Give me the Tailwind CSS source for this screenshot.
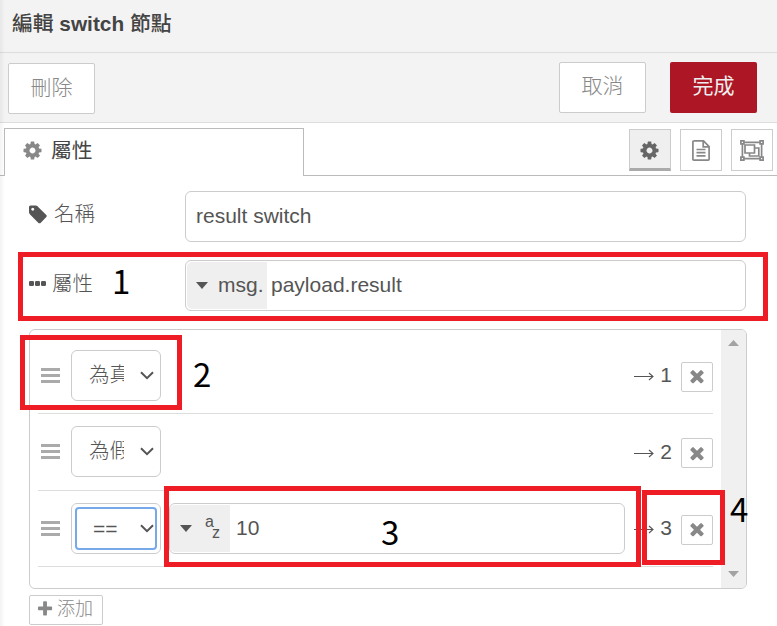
<!DOCTYPE html>
<html lang="zh-Hant">
<head>
<meta charset="utf-8">
<title>編輯 switch 節點</title>
<script src="https://cdn.jsdelivr.net/npm/@tailwindcss/browser@4"></script>
</head>
<body class="bg-white">
<svg class="hidden">
  <symbol id="cog" viewBox="0 0 1792 1792"><path d="M1152 896q0-106-75-181t-181-75-181 75-75 181 75 181 181 75 181-75 75-181zm512-109v222q0 12-8 23t-20 13l-185 28q-19 54-39 91 35 50 107 138 10 12 10 25t-9 23q-27 37-99 108t-94 71q-12 0-26-9l-138-108q-44 23-91 38-16 136-29 186-7 28-36 28h-222q-14 0-24.5-8.5t-11.5-21.5l-28-184q-49-16-90-37l-141 107q-10 9-25 9-14 0-25-11-126-114-165-168-7-10-7-23 0-12 8-23 15-21 51-66.5t54-70.5q-27-50-41-99l-183-27q-13-2-21-12.5t-8-23.5v-222q0-12 8-23t19-13l186-28q14-46 39-92-40-57-107-138-10-12-10-24 0-10 9-23 26-36 98.5-107.5t94.5-71.5q13 0 26 10l138 107q44-23 91-38 16-136 29-186 7-28 36-28h222q14 0 24.5 8.5t11.5 21.5l28 184q49 16 90 37l142-107q9-9 24-9 13 0 25 10 129 119 165 170 7 8 7 22 0 12-8 23-15 21-51 66.5t-54 70.5q26 50 41 98l183 28q13 2 21 12.5t8 23.5z"/></symbol>
  <symbol id="times" viewBox="0 0 1792 1792"><path d="M1490 1322q0 40-28 68l-136 136q-28 28-68 28t-68-28l-294-294-294 294q-28 28-68 28t-68-28l-136-136q-28-28-28-68t28-68l294-294-294-294q-28-28-28-68t28-68l136-136q28-28 68-28t68 28l294 294 294-294q28-28 68-28t68 28l136 136q28 28 28 68t-28 68l-294 294 294 294q28 28 28 68z"/></symbol>
  <symbol id="bars" viewBox="0 0 19 15"><path d="M0 0h19v3H0zM0 6h19v3H0zM0 12h19v3H0z"/></symbol>
  <symbol id="chevron" viewBox="0 0 14 9"><path d="M1 1.2l6 6 6-6" fill="none" stroke="currentColor" stroke-width="2"/></symbol>
  <symbol id="arrow" viewBox="0 0 20 9"><path d="M0 4.500h19M15 1l4 3.500-4 3.500" fill="none" stroke="currentColor" stroke-width="1.100"/></symbol>
  <symbol id="caret" viewBox="0 0 12 7"><path d="M0 0h12L6 7z"/></symbol>
</svg>
<div class="relative flex h-[626px] w-[777px] flex-col overflow-hidden bg-white font-['Liberation_Sans','Noto_Sans_CJK_TC',sans-serif] text-[21px] leading-[30px] text-[#555]">
  <header class="flex h-[53px] shrink-0 items-center border-b border-[#ddd] bg-[#f3f3f3] pb-[5px] pl-3 text-[20.800px] font-bold text-[#444]"><span class="whitespace-pre"><span class="font-medium">編輯</span> switch <span class="font-medium">節點</span></span></header>
  <div class="flex h-[70px] shrink-0 items-start border-b border-[#ddd] bg-[#f3f3f3] pl-2 pr-5 pt-[9px] font-light text-[#888]">
    <div class="mt-px flex h-[51px] w-[87px] items-center justify-center rounded-[2px] border border-[#ccc] bg-white pb-px">刪除</div>
    <div class="ml-auto flex h-[51px] w-[87px] items-center justify-center rounded-[2px] border border-[#ccc] bg-white pb-[3px]">取消</div>
    <div class="ml-6 flex h-[51px] w-[87px] items-center justify-center rounded-[2px] bg-[#ad1625] pb-[3px] font-normal text-[#eee]">完成</div>
  </div>
  <div class="flex h-[53px] shrink-0 border-b border-[#bbb] pl-1 pr-1">
    <div class="-mb-px mt-[5px] flex h-12 w-[300px] items-center border border-b-0 border-[#bbb] bg-white pb-[4px] pl-[17px] text-[20.800px] text-[#444]">
      <svg class="size-[21px] fill-[#888]"><use href="#cog"/></svg><span class="ml-2 pt-px">屬性</span>
    </div>
    <div class="ml-auto mt-[6px] flex gap-[9px] text-[#888]">
      <div class="flex size-[42px] items-center justify-center border border-b-[3px] border-[#ccc] border-b-[#aaa] bg-[#efefef] pr-px pt-[2px]"><svg class="size-[21px] fill-[#666]"><use href="#cog"/></svg></div>
      <div class="flex size-[42px] items-center justify-center border border-[#ccc]">
        <svg class="h-[21px] w-[18px]" viewBox="0 0 18 21" fill="none" stroke="currentColor" stroke-width="1.700"><path d="M1.700 .9h9.800l5.600 5.700v12.600q0 .9-.9.900H1.800q-.9 0-.9-.9V1.800q0-.9.900-.9zM11.200 1v5.800h6M4.500 9.500h9M4.500 12.700h9M4.500 15.800h9"/></svg>
      </div>
      <div class="flex size-[42px] items-center justify-center border border-[#ccc]">
        <svg class="h-[21px] w-6" viewBox="0 0 24 21" fill="none" stroke="currentColor" stroke-width="1.700"><path d="M4 2.300h16M4 18.700h16M2.400 4v13M21.600 4v13"/><path d="M.9.9h3v3h-3zM20.100.9h3v3h-3zM.9 17.100h3v3h-3zM20.100 17.100h3v3h-3zM5 5h9.500v8H5zM14.500 8h4.300v8H9.500v-3"/></svg>
      </div>
    </div>
  </div>
  <main class="flex flex-col pl-[29px] pt-[15px]">
    <div class="flex h-[51px] w-[717px] items-center font-light">
      <div class="flex w-[156px] items-center pb-1"><svg class="mt-[2px] size-[21px] fill-[#555]" viewBox="128 80 1792 1792"><path d="M576 448q0-53-37.500-90.500t-90.500-37.500-90.500 37.500-37.500 90.500 37.500 90.500 90.500 37.500 90.500-37.500 37.500-90.500zm1067 576q0 53-37 90l-491 492q-39 37-91 37-53 0-90-37l-715-716q-38-37-64.500-101t-26.500-117v-416q0-52 38-90t90-38h416q53 0 117 26.500t102 64.500l715 714q37 39 37 91z"/></svg><span class="ml-1 pb-[2px] text-[20.500px]">名稱</span></div>
      <div class="flex h-full grow items-center rounded-md border border-[#ccc] pb-[2px] pl-[10px]">result switch</div>
    </div>
    <div class="mt-[18px] flex h-[51px] w-[717px] items-center font-light">
      <div class="flex w-[156px] items-center pb-1"><svg class="-mt-px h-[5px] w-[17px] fill-[#555]" viewBox="0 0 17 5"><rect width="5" height="5" rx="1.300"/><rect x="6" width="5" height="5" rx="1.300"/><rect x="12" width="5" height="5" rx="1.300"/></svg><span class="ml-[6px] text-[20.500px]">屬性</span></div>
      <div class="flex h-full grow items-center rounded-md border border-[#ccc] p-px">
        <div class="flex h-full w-20 items-center rounded-l-[5px] bg-[#efefef] pl-[9px]"><svg class="h-[7px] w-3 fill-[#555]"><use href="#caret"/></svg><span class="ml-[10px] pb-[2px]">msg.</span></div>
        <span class="ml-1 pb-[2px]">payload.result</span>
      </div>
    </div>
    <div class="mt-[18px] flex h-[260px] w-[718px] overflow-hidden rounded-md border border-[#ccc]">
      <div class="flex w-[691px] flex-col pl-2 pr-2 pt-[7px]">
        <div class="flex h-[77px] items-center border-b border-[#ddd] pl-[3px] pt-[2px]">
          <svg class="mb-px h-[15px] w-[19px] fill-[#aaa]"><use href="#bars"/></svg>
          <div class="mb-px ml-[11px] flex h-[51px] w-[90px] items-center rounded-md border border-[#ccc] pl-[17px] font-light"><span class="mb-px w-[35px] overflow-hidden whitespace-nowrap text-[20.500px]">為真</span><svg class="ml-[16px] h-[9px] w-[14px]"><use href="#chevron"/></svg></div>
          <svg class="ml-auto mt-px h-[9px] w-5"><use href="#arrow"/></svg><span class="ml-[6px] pb-[2px]">1</span>
          <div class="ml-[9px] mt-[2px] flex h-[30px] w-8 items-center justify-center rounded-[2px] border border-[#ccc]"><svg class="-mt-[2px] size-5 fill-[#888]"><use href="#times"/></svg></div>
        </div>
        <div class="flex h-[77px] items-center border-b border-[#ddd] pl-[3px]">
          <svg class="mb-px h-[15px] w-[19px] fill-[#aaa]"><use href="#bars"/></svg>
          <div class="mb-px ml-[11px] flex h-[51px] w-[90px] items-center rounded-md border border-[#ccc] pl-[17px] font-light"><span class="mb-px w-[35px] overflow-hidden whitespace-nowrap text-[20.500px]">為假</span><svg class="ml-[16px] h-[9px] w-[14px]"><use href="#chevron"/></svg></div>
          <svg class="ml-auto mt-[3px] h-[9px] w-5"><use href="#arrow"/></svg><span class="ml-[6px]">2</span>
          <div class="ml-[9px] mt-[2px] flex h-[30px] w-8 items-center justify-center rounded-[2px] border border-[#ccc]"><svg class="size-5 fill-[#888]"><use href="#times"/></svg></div>
        </div>
        <div class="flex h-[76px] items-center border-b border-[#ddd] pl-[3px]">
          <svg class="h-[15px] w-[19px] fill-[#aaa]"><use href="#bars"/></svg>
          <div class="ml-[11px] h-[51px] w-[90px] rounded-md border border-[#ccc] p-[3px]"><div class="flex h-full items-center rounded-[4px] border-2 border-[#76a9ea] pl-4"><span>==</span><svg class="ml-[22px] h-[9px] w-[14px] shrink-0"><use href="#chevron"/></svg></div></div>
          <div class="ml-2 flex h-[51px] w-[456px] items-center rounded-md border border-[#ccc] py-px">
            <div class="flex h-full w-[60px] items-center rounded-l-[5px] bg-[#efefef] pl-[10px]"><svg class="h-[7px] w-3 fill-[#555]"><use href="#caret"/></svg><span class="ml-[13px] flex text-base leading-4"><span class="-mt-[3px]">a</span><span class="-ml-[2px] mt-2">z</span></span></div>
            <span class="ml-[6px] pb-[2px]">10</span>
          </div>
          <svg class="ml-auto mt-[2px] h-[9px] w-5"><use href="#arrow"/></svg><span class="ml-[6px] pb-[2px]">3</span>
          <div class="ml-[9px] mt-[2px] flex h-[30px] w-8 items-center justify-center rounded-[2px] border border-[#ccc]"><svg class="-mt-[2px] size-5 fill-[#888]"><use href="#times"/></svg></div>
        </div>
      </div>
      <div class="flex grow flex-col items-center justify-between bg-[#f0f0f0] pb-[11px] pt-[10px]">
        <svg class="h-[6px] w-[11px] fill-[#a3a3a3]" viewBox="0 0 11 6"><path d="M0 6h11L5.500 0z"/></svg>
        <svg class="h-[6px] w-[11px] fill-[#a3a3a3]" viewBox="0 0 11 6"><path d="M0 0h11L5.500 6z"/></svg>
      </div>
    </div>
    <div class="mt-[6px] flex h-[30px] w-[74px] items-center rounded-[2px] border border-[#ccc] pl-[7px] text-[18px] font-light text-[#888]"><svg class="-mt-[2px] size-[18px] fill-[#888]" viewBox="96 0 1792 1792"><path d="M1600 736v192q0 40-28 68t-68 28h-416v416q0 40-28 68t-68 28h-192q-40 0-68-28t-28-68v-416h-416q-40 0-68-28t-28-68v-192q0-40 28-68t68-28h416v-416q0-40 28-68t68-28h192q40 0 68 28t28 68v416h416q40 0 68 28t28 68z"/></svg><span class="ml-[2px] whitespace-nowrap pb-[2px]">添加</span></div>
  </main>

  <!-- Drawer edge shading and numbered callouts -->
  <div class="absolute inset-y-0 left-0 w-[5px] bg-gradient-to-r from-black/5 to-transparent"></div>
  <div class="absolute left-[18px] top-[252px] h-[69px] w-[750px] border-5 border-[#ee1c24]"></div>
  <div class="absolute left-[20px] top-[335px] h-[75px] w-[162px] border-5 border-[#ee1c24]"></div>
  <div class="absolute left-[164px] top-[486px] h-[81px] w-[477px] border-5 border-[#ee1c24]"></div>
  <div class="absolute left-[642px] top-[490px] h-[75px] w-[83px] border-5 border-[#ee1c24]"></div>
  <div class="font-['Noto_Sans_CJK_TC',sans-serif] text-[33px] leading-[34px] text-black">
    <span class="absolute left-[112px] top-[263px]">1</span>
    <span class="absolute left-[193px] top-[356px]">2</span>
    <span class="absolute left-[381px] top-[514px]">3</span>
    <span class="absolute left-[730px] top-[491px]">4</span>
  </div>
</div>
</body>
</html>
